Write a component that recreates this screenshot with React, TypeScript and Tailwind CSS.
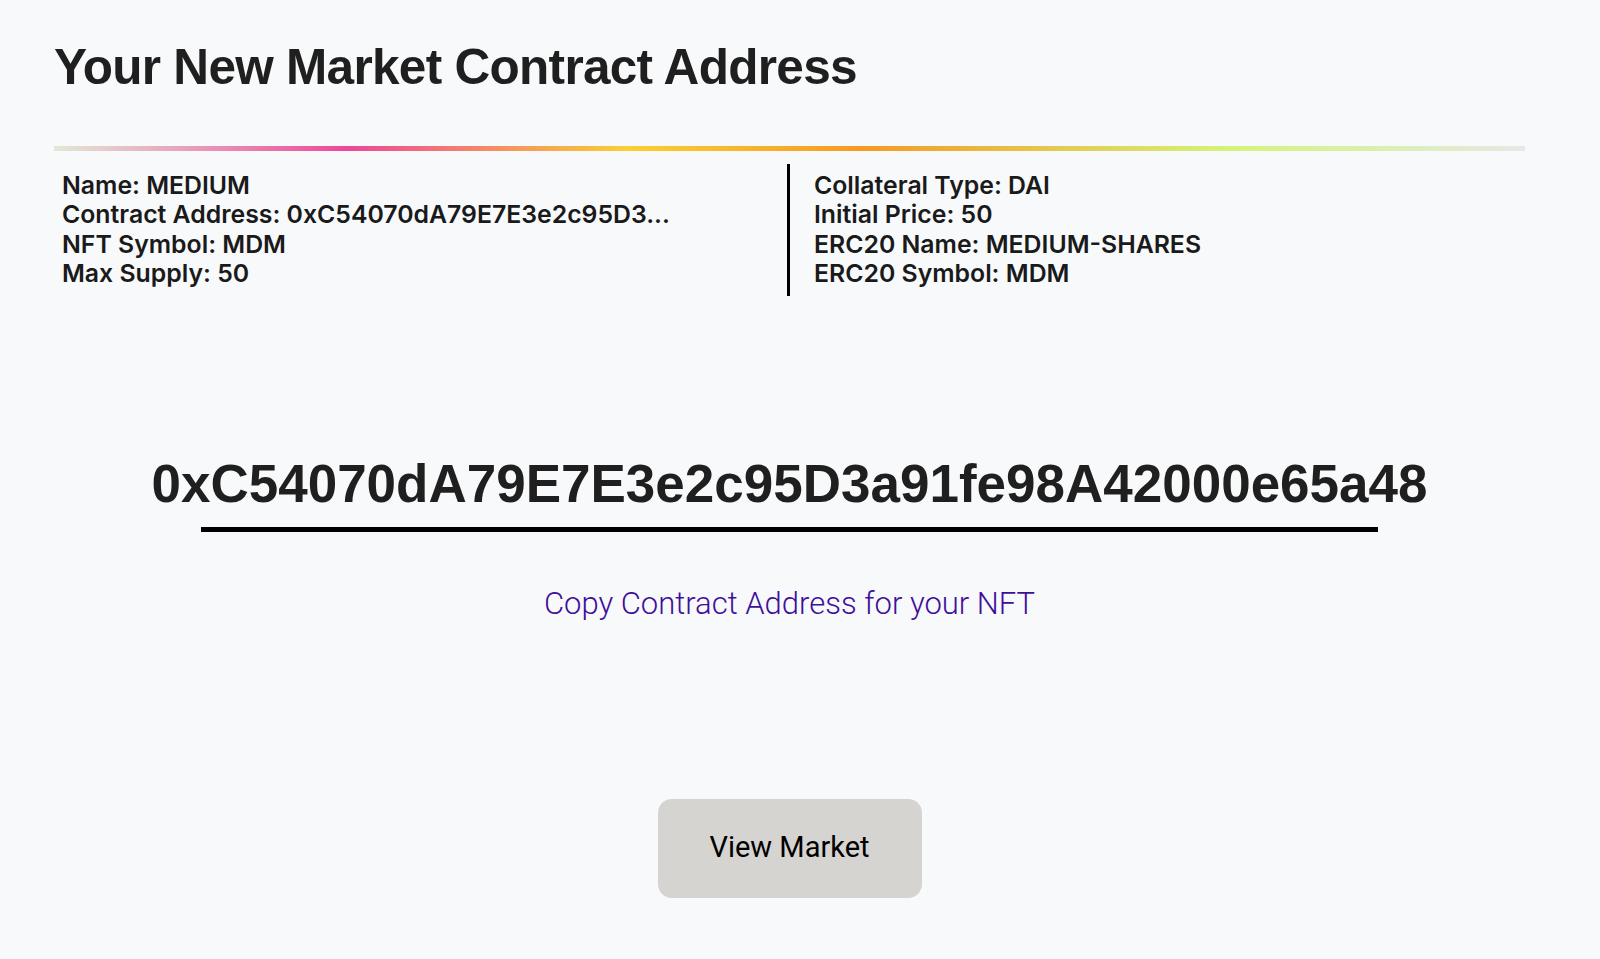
export default function App() {
  const left = [
    "Name: MEDIUM",
    "Contract Address: 0xC54070dA79E7E3e2c95D3...",
    "NFT Symbol: MDM",
    "Max Supply: 50",
  ];
  const right = [
    "Collateral Type: DAI",
    "Initial Price: 50",
    "ERC20 Name: MEDIUM-SHARES",
    "ERC20 Symbol: MDM",
  ];

  return (
    <div className="min-h-screen w-full bg-[#f8f9fa] pl-[54px] pr-[75px] pt-[42px] text-[#1f1f1f]">
      <h1 className="font-['Liberation_Sans',Arial,sans-serif] text-[49.5px] font-bold leading-none tracking-[-0.7px]">
        Your New Market Contract Address
      </h1>

      <div className="mt-[54px] h-[5px] w-full bg-[linear-gradient(90deg,#e3e8d6_0%,#ec4899_20%,#fbcf33_39%,#f59a23_55%,#d4f47a_80%,#e4e9e6_100%)]" />

      <div className="mt-[13px] grid grid-cols-[733px_1fr] font-['Inter',sans-serif] text-[24.8px] font-semibold leading-[29.5px] text-[#1a1a1a]">
        <div className="py-[7px] pl-[8px]">
          {left.map((t) => (
            <div key={t}>{t}</div>
          ))}
        </div>
        <div className="border-l-[3px] border-black py-[7px] pl-[24px]">
          {right.map((t) => (
            <div key={t}>{t}</div>
          ))}
        </div>
      </div>

      <div className="mt-[161px] flex flex-col items-center">
        <div className="font-['Liberation_Sans',Arial,sans-serif] text-[53px] font-bold leading-none text-[#1f1f1f]">
          0xC54070dA79E7E3e2c95D3a91fe98A42000e65a48
        </div>
        <div className="mt-[17px] h-[5px] w-4/5 bg-black" />
        <button className="mt-[56px] cursor-pointer font-['Roboto',sans-serif] text-[31px] font-light leading-none text-[#3f0f9c]">
          Copy Contract Address for your NFT
        </button>
        <button className="mt-[180px] h-[99px] w-[264px] rounded-[14px] bg-[#d6d4d0] font-['Roboto',sans-serif] text-[29px] text-black">
          View Market
        </button>
      </div>
    </div>
  );
}
